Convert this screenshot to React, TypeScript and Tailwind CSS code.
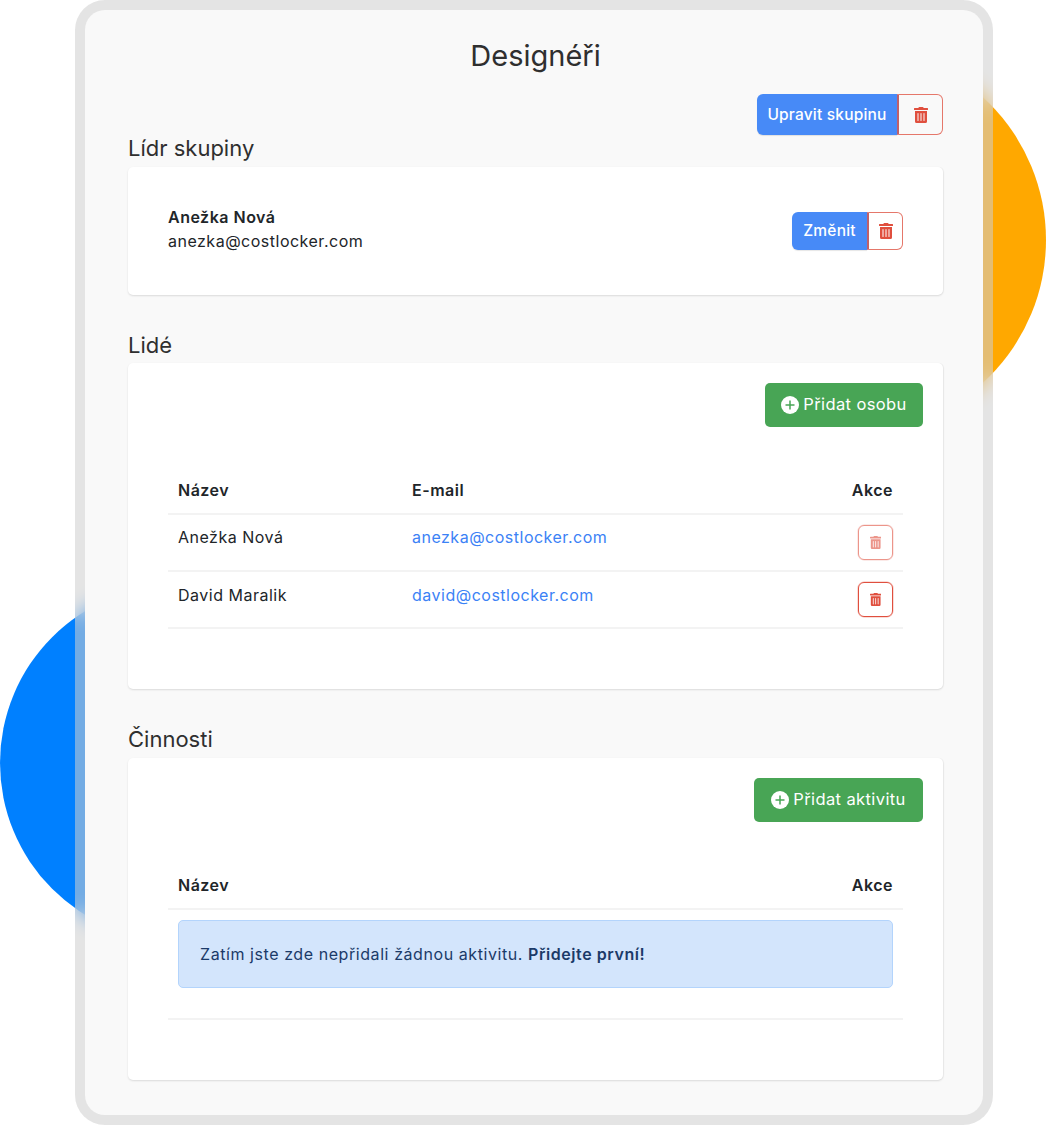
const TrashIcon = ({ className = "" }: { className?: string }) => (
  <svg viewBox="0 0 448 512" fill="currentColor" className={className}>
    <path d="M32 464a48 48 0 0 0 48 48h288a48 48 0 0 0 48-48V128H32zm272-256a16 16 0 0 1 32 0v224a16 16 0 0 1-32 0zm-96 0a16 16 0 0 1 32 0v224a16 16 0 0 1-32 0zm-96 0a16 16 0 0 1 32 0v224a16 16 0 0 1-32 0zM432 32H312l-9.4-18.7A24 24 0 0 0 281.1 0H166.8a23.72 23.72 0 0 0-21.4 13.3L136 32H16A16 16 0 0 0 0 48v32a16 16 0 0 0 16 16h416a16 16 0 0 0 16-16V48a16 16 0 0 0-16-16z" />
  </svg>
)

const PlusCircle = ({ className = "" }: { className?: string }) => (
  <svg viewBox="0 0 18 18" className={className}>
    <circle cx="9" cy="9" r="9" fill="#fff" />
    <path d="M9 4.5v9M4.5 9h9" stroke="#48a555" strokeWidth="1.5" />
  </svg>
)

const Heading = ({ children, className = "" }: { children: string; className?: string }) => (
  <h3 className={`text-[22px] leading-[26px] text-[#2f2f2f] ${className}`}>{children}</h3>
)

const AddButton = ({ label, className = "" }: { label: string; className?: string }) => (
  <button
    className={`flex h-[44px] items-center justify-center gap-[4px] rounded-[5px] bg-[#48a555] pb-[1px] text-[16.5px] tracking-[0.4px] text-white ${className}`}
  >
    <PlusCircle className="size-[18px]" />
    {label}
  </button>
)

const TrashButton = ({ faded = false }: { faded?: boolean }) => (
  <button
    className={`flex size-[35px] items-center justify-center rounded-[6px] border border-[#e04f3e] text-[#e04f3e] shadow-[0_0_0_0.5px_rgba(224,79,62,0.4)] ${faded ? "opacity-60" : ""}`}
  >
    <TrashIcon className="h-[13px]" />
  </button>
)

const people = [
  { name: "Anežka Nová", email: "anezka@costlocker.com", faded: true },
  { name: "David Maralik", email: "david@costlocker.com", faded: false },
]

const cardShadow = "shadow-[0_1px_2px_rgba(0,0,0,0.12),1px_0_1px_rgba(0,0,0,0.04)]"

export default function App() {
  return (
    <div className="relative h-[1125px] w-[1046px] overflow-hidden bg-white font-['Inter',sans-serif] text-[16px] tracking-[0.5px] text-[#212529]">
      {/* Background circles */}
      <div className="absolute left-[660px] top-[47px] size-[386px] rounded-full bg-[#ffa800]" />
      <div className="absolute left-0 top-[585px] size-[356px] rounded-full bg-[#0080ff]" />

      <div className="absolute left-[75px] top-0 h-[1125px] w-[918px] rounded-[30px] bg-[#cecece]/[0.557] p-[10px] backdrop-blur-[10px]">
        <div className="h-full rounded-[20px] bg-[#f9f9f9] pl-[43px] pr-[40px]">
          <h1 className="pb-[18px] pt-[26px] text-center text-[29px] leading-[40px] tracking-normal text-[#2f2f2f]">Designéři</h1>

          <div className="flex h-[41px] justify-end">
            <button className="h-full w-[140px] rounded-l-[6px] bg-[#478af7] text-[15.5px] font-medium tracking-[0.2px] text-white shadow-[0_1px_1px_rgba(0,0,0,0.1)]">
              Upravit skupinu
            </button>
            <button className="flex h-full w-[46px] items-center justify-center rounded-r-[6px] border border-l-2 border-[#e5776a] border-l-[#c0606a] text-[#e04f3e]">
              <TrashIcon className="h-[16px]" />
            </button>
          </div>

          <Heading className="mb-[6px] tracking-normal">Lídr skupiny</Heading>
          <section className={`flex h-[128px] items-center justify-between rounded-[5px] bg-white px-[40px] ${cardShadow}`}>
            <div className="mb-[4px] leading-[24px]">
              <div className="font-semibold">Anežka Nová</div>
              <div>anezka@costlocker.com</div>
            </div>
            <div className="flex h-[38px]">
              <button className="h-full w-[75px] rounded-l-[6px] bg-[#478af7] text-[15.5px] font-medium tracking-[0.2px] text-white shadow-[0_1px_1px_rgba(0,0,0,0.1)]">
                Změnit
              </button>
              <button className="flex h-full w-[36px] items-center justify-center rounded-r-[6px] border border-l-2 border-[#e5776a] border-l-[#c0606a] text-[#e04f3e]">
                <TrashIcon className="h-[16px]" />
              </button>
            </div>
          </section>

          <Heading className="mb-[5px] mt-[37px] tracking-normal">Lidé</Heading>
          <section className={`h-[326px] rounded-[5px] bg-white px-[20px] pt-[20px] ${cardShadow}`}>
            <div className="flex justify-end">
              <AddButton label="Přidat osobu" className="w-[158px]" />
            </div>
            <div className="mx-[20px] mt-[44px]">
              <div className="flex h-[44px] items-center border-b-2 border-[#f3f3f3] px-[10px] pb-[4px] font-semibold">
                <div className="w-[234px]">Název</div>
                <div className="flex-1">E-mail</div>
                <div>Akce</div>
              </div>
              {people.map((person, index) => (
                <div key={person.name} className="flex h-[57px] border-b-2 border-[#f3f3f3] px-[10px] pt-[10px]">
                  <div className={`w-[234px] leading-[24px] ${index === 0 ? "" : "pt-[1px]"}`}>{person.name}</div>
                  <a className={`flex-1 leading-[24px] text-[#3b82f6] ${index === 0 ? "" : "pt-[1px]"}`}>{person.email}</a>
                  <TrashButton faded={person.faded} />
                </div>
              ))}
            </div>
          </section>

          <Heading className="mb-[6px] mt-[37px] tracking-normal">Činnosti</Heading>
          <section className={`h-[322px] rounded-[5px] bg-white px-[20px] pt-[20px] ${cardShadow}`}>
            <div className="flex justify-end">
              <AddButton label="Přidat aktivitu" className="w-[169px]" />
            </div>
            <div className="mx-[20px] mt-[44px]">
              <div className="flex h-[44px] items-center justify-between border-b-2 border-[#f3f3f3] px-[10px] pb-[4px] font-semibold">
                <div>Název</div>
                <div>Akce</div>
              </div>
              <div className="h-[110px] border-b-2 border-[#f3f3f3] px-[10px] pt-[10px]">
                <div className="flex h-[68px] items-center rounded-[5px] border border-[#b3d4fc] bg-[#d3e5fc] px-[21px] tracking-[0.57px] text-[#1b3a68]">
                  <span>
                    Zatím jste zde nepřidali žádnou aktivitu. <strong className="font-semibold">Přidejte první!</strong>
                  </span>
                </div>
              </div>
            </div>
          </section>
        </div>
      </div>
    </div>
  )
}
